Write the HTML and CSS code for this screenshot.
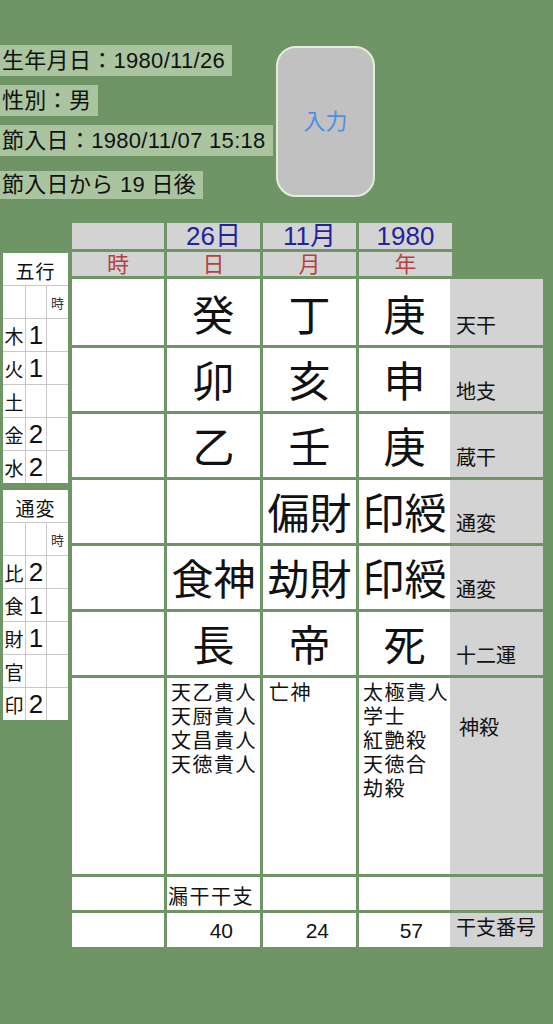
FILE: index.html
```html
<!DOCTYPE html>
<html lang="ja">
<head>
    <meta charset="UTF-8">
    <title>命式</title>
    <link rel="stylesheet" href="styles.css">
</head>
<body>
    <div class="page">
        <div class="top">
            <div class="info">
                <div class="info-line">生年月日：1980/11/26</div>
                <div class="info-line">性別：男</div>
                <div class="info-line">節入日：1980/11/07 15:18</div>
                <div class="info-line last">節入日から 19 日後</div>
            </div>
            <div class="btn">入力</div>
        </div>

        <div class="main">
            <div class="side">
                <div class="mini">
                    <div class="mini-head">五行</div>
                    <div></div><div></div><div class="tiny">時</div>
                    <div class="k">木</div><div class="n">1</div><div></div>
                    <div class="k">火</div><div class="n">1</div><div></div>
                    <div class="k">土</div><div class="n"></div><div></div>
                    <div class="k">金</div><div class="n">2</div><div></div>
                    <div class="k">水</div><div class="n">2</div><div></div>
                </div>
                <div class="mini">
                    <div class="mini-head">通変</div>
                    <div></div><div></div><div class="tiny">時</div>
                    <div class="k">比</div><div class="n">2</div><div></div>
                    <div class="k">食</div><div class="n">1</div><div></div>
                    <div class="k">財</div><div class="n">1</div><div></div>
                    <div class="k">官</div><div class="n"></div><div></div>
                    <div class="k">印</div><div class="n">2</div><div></div>
                </div>
            </div>

            <div class="board">
                <!-- header rows -->
                <div class="hd first"></div>
                <div class="hd date">26日</div>
                <div class="hd date">11月</div>
                <div class="hd date">1980</div>

                <div class="hd pillar first">時</div>
                <div class="hd pillar">日</div>
                <div class="hd pillar">月</div>
                <div class="hd pillar">年</div>

                <!-- 天干 -->
                <div class="cell"></div>
                <div class="cell big">癸</div>
                <div class="cell big">丁</div>
                <div class="pair"><div class="cell big">庚</div><div class="label">天干</div></div>

                <!-- 地支 -->
                <div class="cell"></div>
                <div class="cell big">卯</div>
                <div class="cell big">亥</div>
                <div class="pair"><div class="cell big">申</div><div class="label">地支</div></div>

                <!-- 蔵干 -->
                <div class="cell"></div>
                <div class="cell big">乙</div>
                <div class="cell big">壬</div>
                <div class="pair"><div class="cell big">庚</div><div class="label">蔵干</div></div>

                <!-- 通変 -->
                <div class="cell"></div>
                <div class="cell big"></div>
                <div class="cell big">偏財</div>
                <div class="pair"><div class="cell big">印綬</div><div class="label">通変</div></div>

                <div class="cell"></div>
                <div class="cell big">食神</div>
                <div class="cell big">劫財</div>
                <div class="pair"><div class="cell big">印綬</div><div class="label">通変</div></div>

                <!-- 十二運 -->
                <div class="cell"></div>
                <div class="cell big">長</div>
                <div class="cell big">帝</div>
                <div class="pair"><div class="cell big">死</div><div class="label">十二運</div></div>

                <!-- 神殺 -->
                <div class="cell"></div>
                <div class="cell list">
                    <div>天乙貴人</div><div>天厨貴人</div><div>文昌貴人</div><div>天徳貴人</div>
                </div>
                <div class="cell list shift"><div>亡神</div></div>
                <div class="pair">
                    <div class="cell list">
                        <div>太極貴人</div><div>学士</div><div>紅艶殺</div><div>天徳合</div><div>劫殺</div>
                    </div>
                    <div class="label top">神殺</div>
                </div>

                <!-- 漏干干支 -->
                <div class="cell"></div>
                <div class="cell leak">漏干干支</div>
                <div class="cell"></div>
                <div class="pair"><div class="cell"></div><div class="label"></div></div>

                <!-- 干支番号 -->
                <div class="cell"></div>
                <div class="cell num">40</div>
                <div class="cell num">24</div>
                <div class="pair"><div class="cell num">57</div><div class="label">干支番号</div></div>
            </div>
        </div>
    </div>
</body>
</html>
```

FILE: styles.css
```css
body {
    margin: 0;
    background: #6f9466;
    color: #111;
    font-family: "Liberation Sans", "Noto Sans CJK JP", sans-serif;
}
.page {
    width: 553px;
    min-height: 1024px;
    padding-top: 45px;
    box-sizing: border-box;
}

/* top area */
.top {
    display: flex;
    height: 152px;
}
.info {
    width: 276px;
    display: flex;
    flex-direction: column;
    align-items: flex-start;
    row-gap: 9px;
}
.info-line {
    background: #a9c49f;
    font-size: 22px;
    letter-spacing: 0.3px;
    height: 31px;
    line-height: 31px;
    padding: 0 7px 0 2px;
    white-space: nowrap;
}
.info-line.last {
    margin-top: 6px;
    height: 28px;
    line-height: 28px;
}
.btn {
    margin-top: 1px;
    width: 95px;
    height: 147px;
    border: 2px solid #e3eddb;
    border-radius: 20px;
    background: #c1c1c1;
    color: #4b8fe3;
    font-size: 22px;
    padding-bottom: 6px;
    box-sizing: content-box;
    height: 141px;
    display: flex;
    align-items: center;
    justify-content: center;
}

/* main area */
.main {
    display: flex;
    margin-top: 26px;
    padding-left: 3px;
}
.side {
    width: 65px;
    margin-top: 30px;
    display: flex;
    flex-direction: column;
    row-gap: 7px;
}
.mini {
    display: grid;
    grid-template-columns: 22px 20px 21px;
    grid-auto-rows: 32px;
    gap: 1px;
    background: #c9c9c9;
}
.mini > div {
    background: #fff;
}
.mini .mini-head {
    grid-column: 1 / 4;
    font-size: 19px;
    display: flex;
    align-items: center;
    justify-content: center;
    letter-spacing: 1px;
    padding-top: 2px;
}
.mini .tiny {
    font-size: 13px;
    display: flex;
    align-items: center;
    justify-content: center;
    color: #333;
}
.mini .k {
    font-size: 19px;
    line-height: 1;
    display: flex;
    align-items: flex-end;
    justify-content: center;
    padding-bottom: 4px;
    box-sizing: border-box;
}
.mini .n {
    font-size: 26px;
    line-height: 1;
    display: flex;
    align-items: flex-end;
    justify-content: center;
    padding-bottom: 3px;
    box-sizing: border-box;
}

.board {
    margin-left: 4px;
    display: grid;
    grid-template-columns: 92px 93px 93px 184px;
    grid-template-rows: 26px 24px 66px 63px 63px 63px 63px 63px 196px 33px 34px;
    gap: 3px;
}
.hd {
    background: #d3d3d3;
    display: flex;
    align-items: flex-end;
    justify-content: center;
    line-height: 1;
    width: 93px;
}
.hd.first {
    width: 92px;
}
.date {
    color: #23239a;
    font-size: 26px;
}
.pillar {
    color: #b2433f;
    font-size: 22px;
}
.cell {
    background: #fff;
    box-sizing: border-box;
}
.big {
    font-size: 42px;
    line-height: 1;
    display: flex;
    align-items: flex-end;
    justify-content: center;
    padding-bottom: 7px;
    white-space: nowrap;
}
.list {
    font-size: 20px;
    letter-spacing: 1.5px;
    padding: 3px 4px;
    white-space: nowrap;
}
.list > div {
    height: 24px;
    line-height: 24px;
}
.list.shift {
    padding-left: 6px;
}
.leak {
    font-size: 20px;
    letter-spacing: 1.5px;
    line-height: 1;
    padding: 10px 0 0 1px;
    white-space: nowrap;
}
.num {
    font-size: 21px;
    line-height: 1;
    display: flex;
    align-items: flex-end;
    justify-content: flex-end;
    padding: 0 27px 6px 0;
}
.pair {
    display: flex;
    align-items: stretch;
    height: 100%;
}
.pair > .cell {
    width: 91px;
    height: 100%;
}
.label {
    width: 93px;
    height: 100%;
    background: #d3d3d3;
    font-size: 20px;
    line-height: 1;
    display: flex;
    align-items: flex-end;
    padding: 0 0 9px 6px;
    box-sizing: border-box;
    white-space: nowrap;
}
.label.top {
    align-items: flex-start;
    padding: 40px 0 0 9px;
}
```
